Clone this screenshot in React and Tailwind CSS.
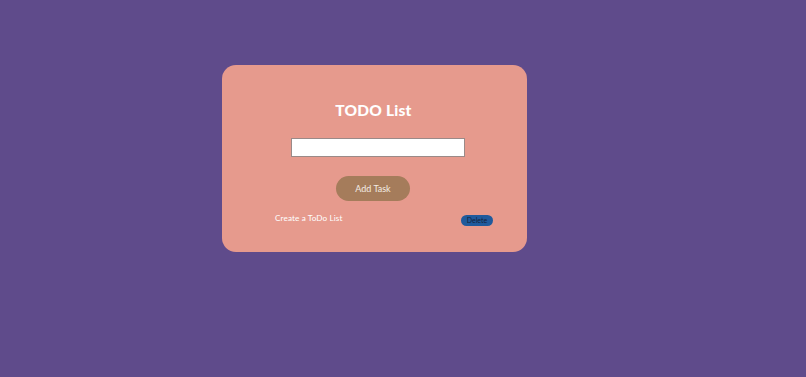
import React, { useState } from "react";

const App = () => {
  const [tasks] = useState(["Create a ToDo List"]);

  return (
    <div className="w-[806px] h-[377px] bg-[#5f4b8b] pt-[65px] pl-[222px] font-['Lato',sans-serif]">
      <div className="w-[305px] h-[187px] bg-[#e69a8d] rounded-[14px] flex flex-col items-center pt-[35px]">
        <h1 className="mr-[2px] text-[15.5px] leading-[20px] font-black text-white tracking-[0.2px]">
          TODO List
        </h1>
        <input
          type="text"
          className="mt-[18px] ml-[7px] w-[174px] h-[19px] bg-white border border-[#9a8a88] outline-none"
        />
        <button className="mt-[19px] mr-[3px] w-[74px] h-[25px] rounded-full bg-[#a57c5b] text-[#f3ece4] text-[9px]">
          Add Task
        </button>
        {/* task list */}
        <ul className="w-full mt-[11px] pl-[53px] pr-[34px]">
          {tasks.map((task) => (
            <li key={task} className="flex items-start justify-between">
              <span className="text-white text-[8.2px] leading-[12px] tracking-[0.1px]">{task}</span>
              <button className="mt-[3px] w-[32px] h-[11px] rounded-full bg-[#1f5a9c] text-[#14213a] text-[7px] leading-[11px]">
                Delete
              </button>
            </li>
          ))}
        </ul>
      </div>
    </div>
  );
};

export default App;
